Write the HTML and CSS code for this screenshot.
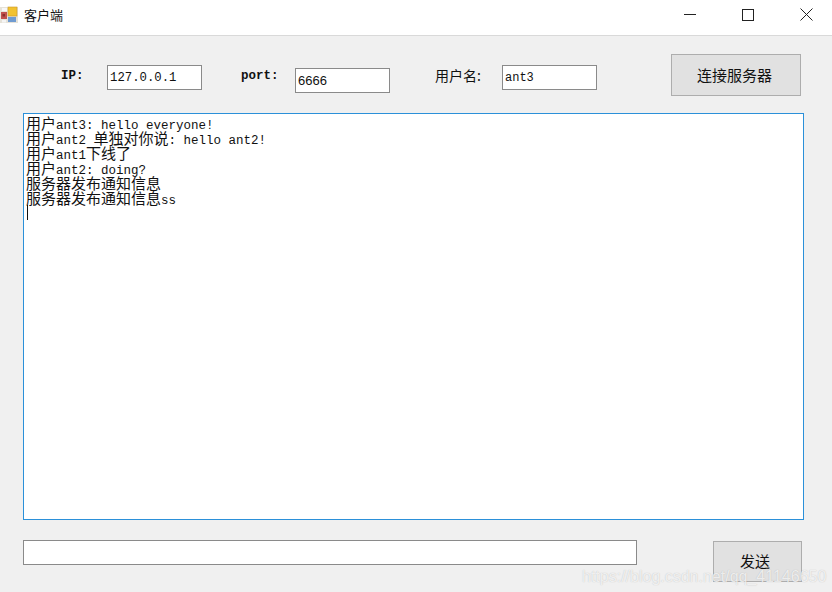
FILE: index.html
```html
<!DOCTYPE html>
<html lang="zh-CN">
<head>
<meta charset="utf-8">
<title>客户端</title>
<link rel="stylesheet" href="styles.css">
</head>
<body>
<div class="window">
  <header class="titlebar">
    <svg class="app-icon" width="18" height="18" viewBox="0 0 18 18">
      <rect x="0" y="1" width="18" height="16" fill="#e6e2d8"/>
      <rect x="8" y="1" width="9" height="9" fill="#f2c230" stroke="#c9982a" stroke-width="0.6"/>
      <rect x="1" y="6" width="6" height="7" fill="#c0504d"/>
      <rect x="2.5" y="8" width="2.5" height="2.5" fill="#8a2f2c"/>
      <rect x="8" y="11" width="8" height="5" fill="#6f9bd1"/>
      <rect x="2" y="14" width="4" height="2.5" fill="#f5f5f5"/>
      <rect x="2" y="2" width="5" height="3" fill="#f7f7f7"/>
    </svg>
    <span class="title">客户端</span>
    <div class="controls">
      <svg class="ctl" width="12" height="12" viewBox="0 0 12 12"><path d="M0 5.5H12" stroke="#222" fill="none"/></svg>
      <svg class="ctl" width="12" height="12" viewBox="0 0 12 12"><rect x="0.5" y="0.5" width="11" height="11" stroke="#222" fill="none"/></svg>
      <svg class="ctl" width="13" height="13" viewBox="0 0 13 13"><path d="M0.5 0.5L12.5 12.5M12.5 0.5L0.5 12.5" stroke="#222" fill="none"/></svg>
    </div>
  </header>
  <main class="content">
    <div class="toolbar">
      <label class="lbl lbl-ip">IP:</label>
      <div class="field field-ip"><span class="mono">127.0.0.1</span></div>
      <label class="lbl lbl-port">port:</label>
      <div class="field field-port"><span class="sans">6666</span></div>
      <label class="lbl lbl-user">用户名:</label>
      <div class="field field-user"><span class="mono small">ant3</span></div>
      <button class="btn btn-connect">连接服务器</button>
    </div>
    <div class="log">
      <div class="line">用户<span class="m">ant3: hello everyone!</span></div>
      <div class="line">用户<span class="m">ant2 </span>单独对你说<span class="m">: hello ant2!</span></div>
      <div class="line">用户<span class="m">ant1</span>下线了</div>
      <div class="line">用户<span class="m">ant2: doing?</span></div>
      <div class="line">服务器发布通知信息</div>
      <div class="line">服务器发布通知信息<span class="m">ss</span></div>
      <div class="caret"></div>
    </div>
    <div class="sendbar">
      <div class="field field-msg"></div>
      <button class="btn btn-send">发送</button>
    </div>
  </main>
  <div class="watermark">https://blog.csdn.net/qq_41146650</div>
</div>
</body>
</html>
```
FILE: styles.css
```css
* { box-sizing: border-box; }
html, body { margin: 0; padding: 0; }
body {
  width: 832px;
  height: 592px;
  overflow: hidden;
  background: #f0f0f0;
  font-family: "Noto Sans CJK SC", "Liberation Mono", monospace;
  color: #111;
}
.window { position: relative; width: 832px; height: 592px; }
.titlebar {
  display: flex;
  align-items: center;
  height: 36px;
  background: #fff;
  border-bottom: 1px solid #d9d9d9;
}
.app-icon { margin-top: -5px; }
.title { margin-left: 6px; margin-top: -5px; font-size: 13px; line-height: 18px; }
.controls {
  display: flex;
  align-items: center;
  gap: 46px;
  margin-left: auto;
  margin-right: 19px;
  margin-top: -6px;
}
.content { padding: 18px 0 0 23px; }
.toolbar { display: flex; align-items: flex-start; height: 59px; }
.lbl { font-size: 13px; line-height: 18px; white-space: nowrap; }
.lbl-ip, .lbl-port {
  font-family: "Liberation Mono", monospace;
  font-size: 12.5px;
  font-weight: 700;
}
.lbl-ip { margin: 13px 0 0 38px; width: 46px; }
.lbl-port { margin: 13px 0 0 39px; width: 54px; }
.lbl-user { margin: 12px 0 0 45px; width: 67px; font-size: 14px; }
.field {
  background: #fff;
  border: 1px solid #8a8a8a;
  display: flex;
  align-items: center;
  height: 25px;
  padding-left: 2px;
  white-space: nowrap;
}
.field-ip { width: 95px; margin-top: 11px; }
.field-port { width: 95px; margin-top: 14px; }
.field-user { width: 95px; margin-top: 11px; }
.mono { font-family: "Liberation Mono", monospace; font-size: 12.3px; }
.small { font-size: 12px; }
.sans { font-family: "Liberation Sans", sans-serif; font-size: 13px; }
.btn {
  background: #e1e1e1;
  border: 1px solid #adadad;
  font-family: "Noto Sans CJK SC", sans-serif;
  font-size: 15px;
  color: #111;
  padding: 0 3px 2px 0;
}
.btn-connect { width: 130px; height: 42px; margin-left: 74px; }
.log {
  width: 781px;
  height: 407px;
  background: #fff;
  border: 1px solid #2b90d9;
  padding: 1px 2px 0;
  font-size: 15px;
  line-height: 15px;
}
.line { height: 15px; white-space: pre; }
.m {
  font-family: "Liberation Mono", monospace;
  font-size: 12.5px;
}
.caret { width: 1px; height: 15px; margin-left: 1px; background: #111; }
.sendbar { display: flex; align-items: flex-start; margin-top: 20px; }
.field-msg { width: 614px; height: 25px; }
.btn-send { width: 89px; height: 41px; margin: 1px 0 0 76px; padding: 0 5px 2px 0; }
.watermark {
  position: absolute;
  left: 582px;
  top: 567px;
  font-family: "Liberation Sans", sans-serif;
  font-size: 16px;
  line-height: 19px;
  color: rgba(255, 255, 255, 0.75);
  text-shadow: 0 0 1px rgba(120, 120, 120, 0.45);
  white-space: nowrap;
}
```
